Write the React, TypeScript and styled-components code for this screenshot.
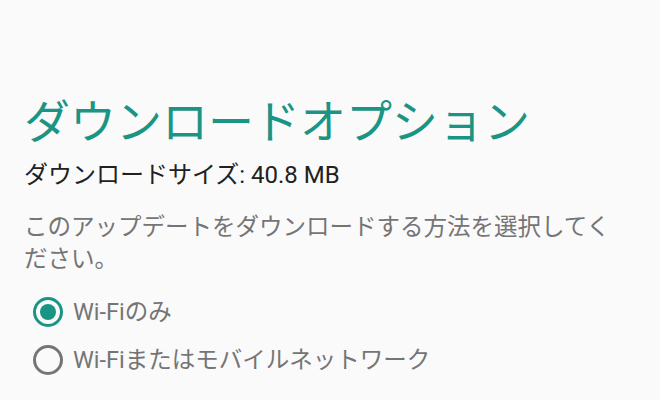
import styled, { createGlobalStyle } from 'styled-components';

const GlobalStyle = createGlobalStyle`
  html, body {
    margin: 0;
    padding: 0;
    background: #fafafa;
  }
  body {
    font-family: Roboto, "Noto Sans CJK JP", sans-serif;
  }
`;

const Screen = styled.div`
  width: 660px;
  height: 400px;
  overflow: hidden;
  box-sizing: border-box;
  padding: 90px 24px 0 24px;
  background: #fafafa;
`;

const Title = styled.h1`
  margin: 0;
  font-size: 46px;
  font-weight: 400;
  line-height: 64px;
  color: #1a9484;
`;

const SizeLine = styled.div`
  margin: 5px 0 0 0;
  font-size: 24px;
  line-height: 32px;
  color: #212121;
`;

const Description = styled.p`
  margin: 20px 0 0 0;
  width: 600px;
  font-size: 23.5px;
  line-height: 32px;
  color: #757575;
`;

const Options = styled.div`
  margin-top: 21px;
  display: flex;
  flex-direction: column;
  gap: 16px;
`;

const OptionRow = styled.label`
  display: flex;
  align-items: center;
  gap: 10px;
  padding-left: 9px;
  font-size: 23.5px;
  line-height: 32px;
  color: #757575;
`;

const Radio = styled.span<{ $checked: boolean }>`
  box-sizing: border-box;
  width: 30px;
  height: 30px;
  border-radius: 50%;
  border: 3px solid ${(p) => (p.$checked ? '#1a9484' : '#757575')};
  display: flex;
  align-items: center;
  justify-content: center;

  &::after {
    content: '';
    width: 16px;
    height: 16px;
    border-radius: 50%;
    background: #1a9484;
    display: ${(p) => (p.$checked ? 'block' : 'none')};
  }
`;

const options = [
  { label: 'Wi-Fiのみ', checked: true },
  { label: 'Wi-Fiまたはモバイルネットワーク', checked: false },
];

export default function App() {
  return (
    <>
      <GlobalStyle />
      <Screen>
        <Title>ダウンロードオプション</Title>
        <SizeLine>ダウンロードサイズ: 40.8 MB</SizeLine>
        <Description>
          このアップデートをダウンロードする方法を選択してください。
        </Description>
        <Options>
          {options.map((o) => (
            <OptionRow key={o.label}>
              <Radio $checked={o.checked} />
              {o.label}
            </OptionRow>
          ))}
        </Options>
      </Screen>
    </>
  );
}
